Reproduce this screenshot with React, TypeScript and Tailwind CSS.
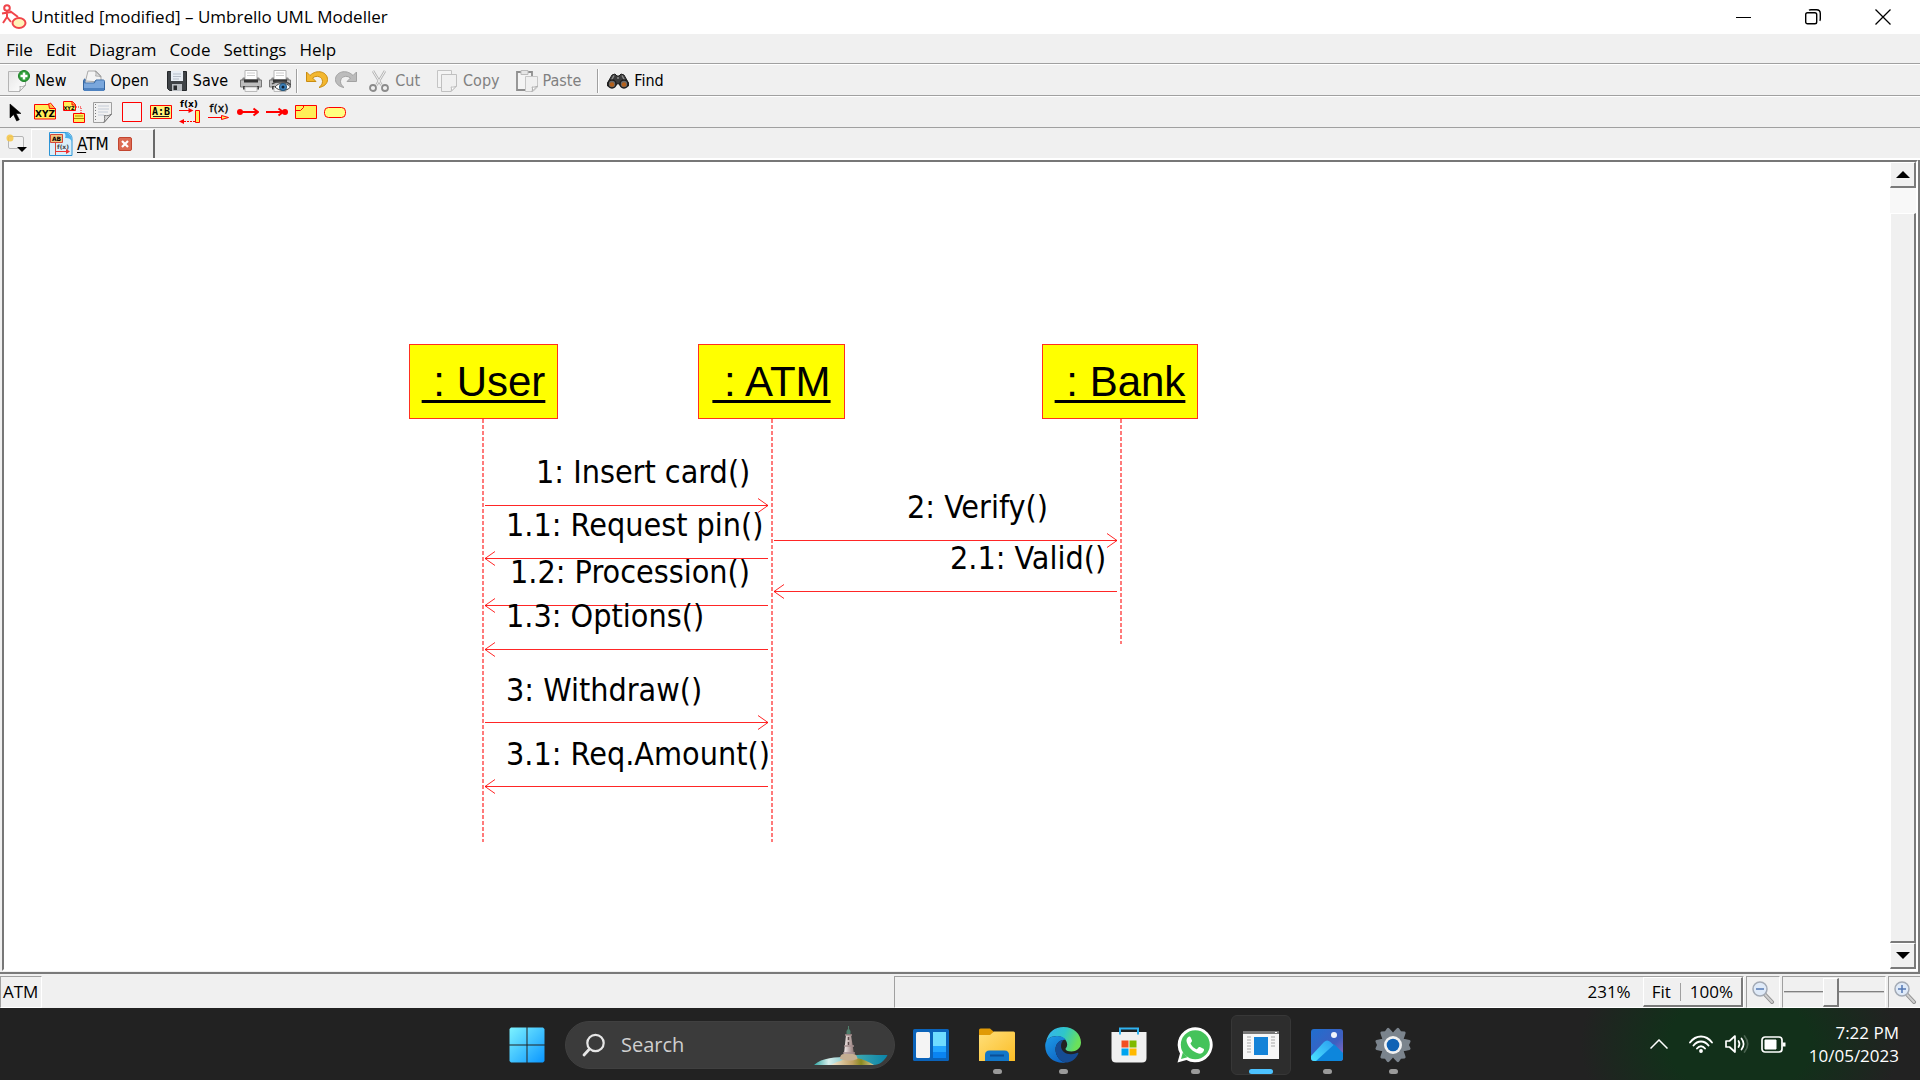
import type { ReactNode } from 'react';

const UI = "font-['Open_Sans','Noto_Sans',sans-serif]";
const TAHOMA = "font-['DejaVu_Sans_Condensed','Noto_Sans',sans-serif]";

/* ---------- window and toolbar icons ---------- */

const AppIcon = () => (
  <svg width="26" height="26" viewBox="0 0 26 26" fill="none" stroke="#f0444a" strokeWidth="2">
    <circle cx="6" cy="4" r="2.8" />
    <path d="M6 7v7M1 9.5l9-1.5M6 13l-4 6M6 13l4 5M9 7l8 6" />
    <ellipse cx="18" cy="19" rx="6.5" ry="5" fill="#fff3b8" />
  </svg>
);

const NewIcon = () => (
  <svg width="22" height="22" viewBox="0 0 22 22">
    <defs>
      <linearGradient id="paper" x1="0" y1="0" x2="1" y2="1">
        <stop offset="0" stopColor="#e6e6e6" />
        <stop offset="1" stopColor="#ffffff" />
      </linearGradient>
    </defs>
    <path d="M.5 1.500h17V15l-6 6.500H.5z" fill="url(#paper)" stroke="#b4b4b4" />
    <path d="M11.500 21.500c1-2 .8-4 .3-5 2 .5 4 0 5.700-1.500z" fill="#fff" stroke="#aaa" />
    <circle cx="16" cy="6" r="5.500" fill="#2f9e3a" stroke="#1d8028" />
    <path d="M16 2.500v7M12.500 6h7" stroke="#fff" strokeWidth="2.500" />
  </svg>
);

const OpenIcon = () => (
  <svg width="22" height="22" viewBox="0 0 22 22">
    <path d="M2.500 11 5 1h8l5 5v6z" fill="#f4f4f4" stroke="#aaa" />
    <path d="M12 1c1.500 2 1 4 .5 5 2 0 4 .3 5.500 1z" fill="#ddd" stroke="#999" strokeWidth=".7" />
    <path d="M.5 11c0-1 .5-2 1.500-2v4h9l2-3h7c1 0 1.500.5 1.500 1.500V20H.5z" fill="#5b8cc9" stroke="#36669f" />
    <path d="M1 13.500h10.500l2-3H21V20H1z" fill="#7aa7dc" />
    <path d="M1 18h20v3H1z" fill="#4e82c0" />
  </svg>
);

const SaveIcon = () => (
  <svg width="22" height="22" viewBox="0 0 22 22">
    <path d="M1.500 1.500h19v19h-17l-2-2z" fill="#3f4347" stroke="#25282b" />
    <path d="M5 1h12v10H5z" fill="#e8eef5" />
    <path d="M7 4h8M7 6.500h8M7 9h6" stroke="#b5bdc8" />
    <path d="M6 14h10v7H6z" fill="#b9bdc2" />
    <path d="M7.500 15.500h3.500V20H7.500z" fill="#2a2d30" />
  </svg>
);

const PrinterShape = () => (
  <>
    <path d="M5 .5h12V10H5z" fill="#fff" stroke="#b5b5b5" />
    <path d="M7 3h8M7 5.500h8" stroke="#ccc" />
    <path d="M3 7.500h2V10h12V7.500h2l2 3H1z" fill="#8a8a8a" />
    <path d="M.5 10h21v7H.5z" fill="#bdbdbd" stroke="#777" />
    <path d="M4 9.500h14v3H4z" fill="#333" />
    <path d="M3 16h16v3.500H3z" fill="#444" />
    <path d="M5 17h12v4.500H5z" fill="#f5f5f5" stroke="#bbb" />
  </>
);

const PrintIcon = () => (
  <svg width="22" height="22" viewBox="0 0 22 22">
    <PrinterShape />
  </svg>
);

const PreviewIcon = () => (
  <svg width="22" height="22" viewBox="0 0 22 22">
    <PrinterShape />
    <path d="M6 17c4-5 11-5 15.500 0-4 4.500-11 4.500-15.500 0z" fill="#fff" stroke="#444" />
    <circle cx="14" cy="17" r="3.600" fill="#3f83bd" stroke="#24587f" />
    <circle cx="14" cy="17" r="1.500" fill="#123" />
    <path d="M3 14c4-3 13-4 19 1" stroke="#4a4a4a" strokeWidth="1.500" fill="none" />
  </svg>
);

const UndoIcon = ({ mirrored = false }: { mirrored?: boolean }) => (
  <svg width="22" height="22" viewBox="0 0 22 22">
    <path
      d={
        mirrored
          ? 'M21.500 2v9.500H12l3.500-3.500C11 4.500 5.500 7 5.500 11.500c0 2.500 1.500 4.500 3.500 6C3.500 16.500.5 13.500.5 9.500.5 2 11-1.500 18 5.500z'
          : 'M.5 2v9.500H10L6.500 8c4.500-3.500 10-1 10 3.500 0 2.500-1.500 4.500-3.500 6 5.500-1 8.500-4 8.500-8C21.500 2 11-1.500 4 5.500z'
      }
      fill={mirrored ? '#bcbcbc' : '#f3b72f'}
      stroke={mirrored ? '#a2a2a2' : '#c98c10'}
    />
  </svg>
);

const CutIcon = () => (
  <svg width="22" height="22" viewBox="0 0 22 22" fill="none">
    <path d="M5 1l8.500 14M17 1 8.500 15" stroke="#b4b4b4" strokeWidth="2.500" />
    <path d="M5 1l8.500 14M17 1 8.500 15" stroke="#f3f3f3" />
    <circle cx="5" cy="18" r="3" stroke="#8c8c8c" strokeWidth="1.800" />
    <circle cx="17" cy="18" r="3" stroke="#8c8c8c" strokeWidth="1.800" />
  </svg>
);

const CopyIcon = () => (
  <svg width="22" height="22" viewBox="0 0 22 22">
    <path d="M1.500.5h14v17h-14z" fill="#f4f4f4" stroke="#c4c4c4" />
    <path d="M5.500 4.500h15V16L15 21.500H5.500z" fill="#f0f0f0" stroke="#c0c0c0" />
    <path d="M15 21.500c.8-2 .5-3.500 0-4.500 2 .3 4 0 5.500-1z" fill="#fff" stroke="#bbb" />
  </svg>
);

const PasteIcon = () => (
  <svg width="22" height="22" viewBox="0 0 22 22">
    <path d="M1 2h15v18H1z" fill="#f4f4f4" stroke="#8e8e8e" strokeWidth="1.800" />
    <path d="M5 .5h7v4H5z" fill="#e6e6e6" stroke="#bbb" />
    <path d="M9.500 6.500h12V17L17 21.500H9.500z" fill="#f0f0f0" stroke="#c6c6c6" />
    <path d="M16 21.500c.8-2 .5-3.500 0-4.500 2 .3 4 0 5.500-1z" fill="#fff" stroke="#aaa" />
  </svg>
);

const FindIcon = () => (
  <svg width="22" height="22" viewBox="0 0 22 22">
    <path d="M5 5l3-1 2 2h2l2-2 3 1 4.500 8v3l-9-1-1.500-2-1.500 2-9 1v-3z" fill="#3b3b3b" stroke="#222" />
    <path d="M7 5.500 4 11M15 5.500l3 5.500M10 8h2" stroke="#8d8d8d" strokeWidth="1.500" />
    <circle cx="5" cy="14" r="4" fill="#6a6a6a" stroke="#1c1c1c" strokeWidth="1.500" />
    <circle cx="17" cy="14" r="4" fill="#6a6a6a" stroke="#1c1c1c" strokeWidth="1.500" />
    <circle cx="5" cy="14.500" r="2.300" fill="#b5611c" />
    <circle cx="17" cy="14.500" r="2.300" fill="#b5611c" />
  </svg>
);

/* ---------- UML tool icons ---------- */

const CursorTool = () => (
  <svg width="22" height="22" viewBox="0 0 22 22">
    <path d="M5 3v14l3.500-3.500 3.200 6.500 2.600-1.300-3.200-6.200H16z" fill="#000" stroke="#000" strokeWidth=".6" />
  </svg>
);

const ClassTool = () => (
  <svg width="22" height="22" viewBox="0 0 22 22">
    <path d="M.5 3.500h14l2-1.500 5 6v10H.5z" fill="#ffee58" stroke="#f00" />
    <path d="M14.500 2.500l1 5h6" fill="#ffb347" stroke="#f00" />
    <text x="11" y="16" textAnchor="middle" className="font-['DejaVu_Sans'] text-[9px] font-bold">XYZ</text>
  </svg>
);

const ClassLinkTool = () => (
  <svg width="22" height="22" viewBox="0 0 22 22">
    <path d="M.5.5h9l3 3v6H.5z" fill="#ffee58" stroke="#f00" />
    <path d="M9 .5v3.500h3.500" fill="#ffb347" stroke="#f00" />
    <text x="6" y="8.500" textAnchor="middle" className="font-['DejaVu_Sans'] text-[5px] font-bold">XYZ</text>
    <path d="M13 6h5v6" fill="none" stroke="#f00" strokeDasharray="1 1" />
    <path d="M10.500 12.500h11v9h-11z" fill="#ffee58" stroke="#f00" />
    <path d="M12 15h8M11 17.500h10" stroke="#a80" />
  </svg>
);

const NoteTool = () => (
  <svg width="22" height="22" viewBox="0 0 22 22">
    <path d="M1.500 1.500h18V13L12 21.500H1.500z" fill="#f1f1f1" stroke="#9f9f9f" />
    <path d="M6 5h11M6 8h11M6 11h10M6 14h6" stroke="#c4cbd6" />
    <path d="M3.500 3v17" stroke="#777" strokeDasharray="1 2" />
    <path d="M12 21.500c1-3 .8-5.500.3-7 3 .6 5 0 7.200-1.500z" fill="#ddd" stroke="#777" />
  </svg>
);

const BoxTool = () => (
  <svg width="22" height="22" viewBox="0 0 22 22">
    <path d="M1.500 1.500h19v19h-19z" fill="#f4f4f4" stroke="#f00" />
  </svg>
);

const ObjectTool = () => (
  <svg width="22" height="22" viewBox="0 0 22 22">
    <path d="M.5 4.500h21v13H.5z" fill="#fff27a" stroke="#f00" />
    <text x="11" y="14" textAnchor="middle" className="font-['DejaVu_Sans_Mono'] text-[10px] font-bold">A:B</text>
    <path d="M3 15.500h16" stroke="#222" />
  </svg>
);

const SyncTool = () => (
  <svg width="22" height="22" viewBox="0 0 22 22" overflow="visible">
    <text x="10" y="6" textAnchor="middle" className="font-['DejaVu_Sans'] text-[9px] font-bold">f(x)</text>
    <path d="M0 9.500h12" stroke="#f00" />
    <path d="M9.500 7l5 2.500-5 2.500z" fill="#f00" />
    <path d="M16.500 9.500h4v12h-4z" fill="#ffee58" stroke="#f00" />
    <path d="M16 20.500H4" stroke="#f00" strokeDasharray="2 1" />
    <path d="M5 18l-5 2.500L5 23z" fill="#f00" />
  </svg>
);

const AsyncTool = () => (
  <svg width="22" height="22" viewBox="0 0 22 22" overflow="visible">
    <text x="11" y="11" textAnchor="middle" className="font-['DejaVu_Sans'] text-[11px]" stroke="#000" strokeWidth=".3">f(x)</text>
    <path d="M0 16.500h14" stroke="#f00" />
    <path d="M13.500 14.500l7 2-7 2z" fill="#ffee58" stroke="#f00" />
  </svg>
);

const FoundTool = () => (
  <svg width="22" height="22" viewBox="0 0 22 22" fill="none" stroke="#f00" strokeWidth="2">
    <circle cx="3" cy="11" r="3" fill="#f00" stroke="none" />
    <path d="M3 11h18M16.500 7.500l4.500 3.500-4.500 3.500" />
  </svg>
);

const LostTool = () => (
  <svg width="22" height="22" viewBox="0 0 22 22" fill="none" stroke="#f00" strokeWidth="2">
    <circle cx="19" cy="11" r="3" fill="#f00" stroke="none" />
    <path d="M0 11h18M12.500 7.500 17 11l-4.500 3.500" />
  </svg>
);

const FragmentTool = () => (
  <svg width="22" height="22" viewBox="0 0 22 22">
    <path d="M.5 4.500h21v13H.5z" fill="#ffee58" stroke="#f00" />
    <path d="M.5 9.500h5l3-3v-2" fill="none" stroke="#f00" />
  </svg>
);

const PreconditionTool = () => (
  <svg width="22" height="22" viewBox="0 0 22 22">
    <rect x=".5" y="6.500" width="21" height="10" rx="4" fill="#ffff80" stroke="#f00" />
  </svg>
);

const NewTabIcon = () => (
  <svg width="22" height="22" viewBox="0 0 22 22">
    <rect x="3.500" y="3.500" width="15" height="12" rx="1.500" fill="#f2f2f2" stroke="#b5b5b5" />
    <circle cx="5" cy="5" r="3.500" fill="#f6c544" opacity=".85" />
    <path d="M12 14h10l-5 5z" fill="#000" />
  </svg>
);

const DiagramTabIcon = () => (
  <svg width="24" height="24" viewBox="0 0 24 24">
    <path d="M.5.500h17c3 0 5.500 3 5.500 6v17H.5z" fill="#d9effa" stroke="#2b94d6" />
    <path d="M15 .5c5 0 8 3 8 9-1.500-3-4-4-7-3.500 1-2 .5-4-1-5.500z" fill="#4db1ea" />
    <path d="M1.500 2.500h12v8h-12z" fill="#f1c27a" stroke="#d3473a" />
    <text x="7.500" y="9" textAnchor="middle" className="font-['DejaVu_Sans'] text-[6px] font-bold">AB</text>
    <path d="M6.500 11v12" stroke="#d3473a" />
    <text x="14" y="17" textAnchor="middle" className="font-['DejaVu_Sans'] text-[6px] font-bold" fill="#444">f(x)</text>
    <path d="M7 19.500h12" stroke="#e33" />
    <path d="M17 17l4 2.500-4 2.500z" fill="#e33" />
  </svg>
);

const ZoomIcon = ({ plus = false }: { plus?: boolean }) => (
  <svg width="24" height="24" viewBox="0 0 24 24">
    <path d="M13.500 14l7.500 8" stroke="#8f8f8f" strokeWidth="4" strokeLinecap="round" />
    <path d="M13.500 14l7.500 8" stroke="#cfcfcf" strokeWidth="2" strokeLinecap="round" />
    <circle cx="9" cy="9" r="7" fill="#dfeaf8" stroke="#a3aab5" strokeWidth="1.500" />
    <path d={plus ? 'M5 9h8M9 5v8' : 'M5 9h8'} stroke="#5478b4" strokeWidth="1.500" />
  </svg>
);

/* ---------- taskbar icons ---------- */

const StartIcon = () => (
  <svg width="36" height="36" viewBox="0 0 36 36">
    <defs>
      <linearGradient id="win" x1="0" y1="0" x2="1" y2="1">
        <stop offset="0" stopColor="#7df3ff" />
        <stop offset="1" stopColor="#0a96ff" />
      </linearGradient>
    </defs>
    <path d="M2 .500h15.500v17H.500V2zM18.500.5H34L35.500 2v15.500h-17zM.5 18.500h17v17H2L.5 34zM18.500 18.500h17V34L34 35.500H18.500z" fill="url(#win)" />
  </svg>
);

const WidgetsIcon = () => (
  <svg width="36" height="32" viewBox="0 0 36 32">
    <rect width="36" height="32" rx="1.500" fill="#0a63ba" />
    <rect x="3" y="3" width="14" height="26" rx="1.500" fill="#f4f4f4" />
    <path d="M20 3h13v14H20z" fill="#6fdcff" />
    <path d="M20 17h13v6H20z" fill="#22a5ff" />
    <path d="M20 23h13v6H20z" fill="#0a84f2" />
  </svg>
);

const ExplorerIcon = () => (
  <svg width="36" height="34" viewBox="0 0 36 34">
    <defs>
      <linearGradient id="folder" x1="0" y1="0" x2="1" y2="1">
        <stop offset="0" stopColor="#ffdf7a" />
        <stop offset="1" stopColor="#fbbd25" />
      </linearGradient>
    </defs>
    <path d="M0 2Q0 .5 1.500.5H11l4 3.500-3 4H0z" fill="#e09a06" />
    <path d="M0 7h11l4-3.500h19.500Q36 3.500 36 5v28H0z" fill="url(#folder)" />
    <path d="M6 33v-6q0-4.500 4.500-4.500h15q4.500 0 4.500 4.500v6z" fill="#1277c9" />
    <path d="M11 27.500h14" stroke="#0a4f96" strokeWidth="2" />
  </svg>
);

const EdgeIcon = () => (
  <svg width="36" height="36" viewBox="0 0 36 36">
    <defs>
      <linearGradient id="edgeTop" x1="0" y1="0" x2="1" y2=".3">
        <stop offset="0" stopColor="#36b0f5" />
        <stop offset=".55" stopColor="#2fc6c9" />
        <stop offset="1" stopColor="#6be05a" />
      </linearGradient>
      <linearGradient id="edgeLow" x1="0" y1="0" x2=".6" y2="1">
        <stop offset="0" stopColor="#1d9ce8" />
        <stop offset="1" stopColor="#0f66c4" />
      </linearGradient>
    </defs>
    <path d="M1 15C3 5 10 0 18.500 0 29 0 36 7.500 36 15.500c0 6-5 9-9.500 9-4 0-6-1.500-6-2.500s1.700-1.800 1.700-4.500c0-4-4.200-8.500-10.200-8.500C7 9 3 11 1 15z" fill="url(#edgeTop)" />
    <path d="M.3 17C1 12 6 9 12 9c4 0 7.500 1.500 9 4-5-1-10.500 3-10.500 9.500 0 6 4.500 12.500 10.500 13-11 2-22-6-20.700-18.500z" fill="url(#edgeLow)" />
    <path d="M10.500 22.500C10.500 17 14 13 18.500 13c-2 2-2.500 4-2.500 6 0 6 7 10 14.500 7.500.9-.3 2.200-1 2.700-.7.600.3-.2 1.700-.7 2.400C29.500 33 25.500 35.500 21 35.500c-6-.500-10.500-7-10.500-13z" fill="#154c94" />
  </svg>
);

const StoreIcon = () => (
  <svg width="36" height="36" viewBox="0 0 36 36">
    <path d="M9 7V1.500h18V7" fill="none" stroke="#2fb2f0" strokeWidth="2" />
    <path d="M.5 5h35v26q0 4.500-4.500 4.500H5Q.5 35.500.5 31z" fill="#f1f1f1" />
    <path d="M9 5v2.500M27 5v2.500" stroke="#2fb2f0" strokeWidth="2" />
    <path d="M10.500 13.500h7v7h-7z" fill="#f25022" />
    <path d="M18.500 13.500h7v7h-7z" fill="#7fba00" />
    <path d="M10.500 21.500h7v7h-7z" fill="#00a4ef" />
    <path d="M18.500 21.500h7v7h-7z" fill="#ffb900" />
  </svg>
);

const WhatsAppIcon = () => (
  <svg width="36" height="36" viewBox="0 0 36 36">
    <path d="M.5 35.500 3 26.500A17.500 17.500 0 1 1 9.500 33z" fill="#fff" />
    <circle cx="18.300" cy="17.700" r="14.500" fill="#44c35a" />
    <path d="M4 32l1.800-6.500 4.700 4.800z" fill="#44c35a" />
    <path d="M12 9.500c-2 1-3 3-2.300 5.500C11.300 20.500 16 25 21.500 26.500c2.500.6 5-1 5.500-3.300.2-1-.2-1.300-1-1.700l-3-1.400c-.7-.3-1.200-.2-1.600.4l-1 1.300c-.4.500-.9.500-1.500.2-2.200-1-4-2.700-5.200-4.900-.3-.5-.2-.9.200-1.300l.8-1c.4-.5.400-.9.200-1.500l-1.300-3.100c-.3-.8-.9-.9-1.600-.7z" fill="#fff" />
  </svg>
);

const WindowIcon = () => (
  <svg width="36" height="28" viewBox="0 0 36 28">
    <path d="M0 0h36v28H0z" fill="#f7f7f7" />
    <path d="M0 0h36v3H0z" fill="#777" />
    <path d="M32 1.500h2" stroke="#fff" />
    <path d="M11 6h14v18H11z" fill="#1483d8" />
    <path d="M4 6h4M4 9h4M4 12h4M4 15h4M4 18h4M4 21h4M28 6h4M28 9h4M28 12h4M28 15h4" stroke="#cfcfcf" strokeWidth="2" />
  </svg>
);

const PhotosIcon = () => (
  <svg width="32" height="32" viewBox="0 0 32 32">
    <defs>
      <linearGradient id="sky" x1="0" y1="0" x2="1" y2="1">
        <stop offset="0" stopColor="#1f6fd0" />
        <stop offset=".6" stopColor="#3f5fc0" />
        <stop offset="1" stopColor="#9f6ac0" />
      </linearGradient>
      <linearGradient id="hill" x1="1" y1="0" x2="0" y2="1">
        <stop offset="0" stopColor="#2a9df0" />
        <stop offset="1" stopColor="#4be3ff" />
      </linearGradient>
      <clipPath id="photoFrame">
        <rect width="32" height="32" rx="3" />
      </clipPath>
    </defs>
    <g clipPath="url(#photoFrame)">
      <path d="M0 0h32v32H0z" fill="url(#sky)" />
      <path d="M3 32 19 16q2.500-2 5 0l9 9v7z" fill="#0d86dc" />
      <path d="M0 27 13 13q3-3 6.500 0l3 3L5 32H0z" fill="url(#hill)" />
      <circle cx="23" cy="6" r="3" fill="#f0f4fb" />
    </g>
  </svg>
);

const SettingsIcon = () => (
  <svg width="36" height="36" viewBox="0 0 36 36">
    {[30, 90, 150].map((angle) => (
      <path
        key={angle}
        d="M12 6l1-4.500q.4-1.300 1.700-1L18 2l3.300-1.500q1.300-.3 1.700 1L24 6v24l-1 4.500q-.4 1.300-1.700 1L18 34l-3.300 1.500q-1.300.3-1.700-1L12 30z"
        fill="#7b848d"
        transform={`rotate(${angle} 18 18)`}
      />
    ))}
    <circle cx="18" cy="18" r="12.500" fill="#7b848d" />
    <circle cx="18" cy="18" r="9" fill="#f1f1f1" />
    <circle cx="18" cy="18" r="6.300" fill="#0f62b5" />
  </svg>
);

const SearchGlyph = () => (
  <svg width="24" height="24" viewBox="0 0 24 24" fill="none" stroke="#e6e6e6" strokeWidth="2.200" strokeLinecap="round">
    <circle cx="13.500" cy="10" r="8.200" />
    <path d="M7.500 16 2 22" strokeWidth="2.800" />
  </svg>
);

const LighthouseArt = () => (
  <svg width="74" height="40" viewBox="0 0 74 40">
    <defs>
      <linearGradient id="sea" x1="0" y1="0" x2="1" y2="0">
        <stop offset="0" stopColor="#2fa7a4" />
        <stop offset=".2" stopColor="#d9efec" />
        <stop offset=".6" stopColor="#3aa6b0" />
        <stop offset="1" stopColor="#0a83a8" />
      </linearGradient>
      <linearGradient id="tower" x1="0" y1="0" x2="1" y2="0">
        <stop offset="0" stopColor="#f6eeec" />
        <stop offset="1" stopColor="#8d7472" />
      </linearGradient>
      <linearGradient id="land" x1="0" y1="0" x2="1" y2="0">
        <stop offset="0" stopColor="#f0e6d2" />
        <stop offset=".5" stopColor="#c0a063" />
        <stop offset=".7" stopColor="#8a8a1f" />
        <stop offset="1" stopColor="#d8c49a" />
      </linearGradient>
    </defs>
    <path d="M0 39C8 31 22 32 34 30c12-2 24-1 39.500-1-3 6-8 10-14 10z" fill="url(#sea)" />
    <path d="M17 39c6-4 12-4 15-7h10c7 1 13 4 18 7z" fill="url(#land)" />
    <path d="M26 33q0-5 4-5h9q4 0 4.500 5-8 3.500-17.500 0z" fill="#c4ae92" />
    <path d="M32 9h5l3 19H30z" fill="url(#tower)" />
    <path d="M31 9h7M30 20h10M29 27h12" stroke="#a58e8e" strokeWidth="1.500" />
    <path d="M34.500 11v3M34.500 16v3" stroke="#5a4a4a" strokeWidth="1.500" />
    <path d="M32.500 8V5l2-3 2 3v3z" fill="#4f7f6c" />
    <path d="M34.500 0v3" stroke="#4f7f6c" />
  </svg>
);

/* ---------- window chrome ---------- */

function TitleBar() {
  return (
    <header className={`flex h-[34px] items-center bg-white pr-[2px] text-[17px] text-black ${UI}`}>
      <h1 className="flex flex-1 items-center gap-1 pl-px">
        <AppIcon />
        <span className="leading-6">Untitled [modified] – Umbrello UML Modeller</span>
      </h1>
      <button aria-label="Minimize" className="flex h-full w-[70px] items-center justify-center">
        <svg width="15" height="15" viewBox="0 0 15 15"><path d="M0 7.500h15" stroke="#000" /></svg>
      </button>
      <button aria-label="Restore" className="flex h-full w-[70px] items-center justify-center">
        <svg width="16" height="16" viewBox="0 0 16 16" fill="none" stroke="#000" strokeWidth="1.400">
          <rect x=".7" y="3.700" width="11" height="11" rx="1.800" />
          <path d="M4 1.200C4.500.8 5 .7 6 .7h5.500c2.300 0 3.800 1.500 3.800 3.800V10c0 .8-.2 1.300-.6 1.700" />
        </svg>
      </button>
      <button aria-label="Close" className="flex h-full w-[70px] items-center justify-center">
        <svg width="16" height="16" viewBox="0 0 16 16" stroke="#000" strokeWidth="1.300"><path d="M.5.5l15 15M15.500.5l-15 15" /></svg>
      </button>
    </header>
  );
}

function MenuBar() {
  return (
    <nav className={`flex h-[30px] items-center gap-[13px] border-b border-[#a0a0a0] pt-[2px] pl-[6px] text-[17px] leading-6 ${UI}`}>
      {['File', 'Edit', 'Diagram', 'Code', 'Settings', 'Help'].map((item) => (
        <button key={item}>{item}</button>
      ))}
    </nav>
  );
}

function TextTool({ icon, label, disabled = false }: { icon: ReactNode; label: string; disabled?: boolean }) {
  return (
    <button disabled={disabled} className="flex items-center gap-[5px] pr-3 pl-1 text-black disabled:text-[#808080]">
      {icon}
      <span>{label}</span>
    </button>
  );
}

function IconTool({ icon, label, disabled = false }: { icon: ReactNode; label: string; disabled?: boolean }) {
  return (
    <button aria-label={label} disabled={disabled} className="flex w-[29px] shrink-0 items-center justify-center">
      {icon}
    </button>
  );
}

const Divider = () => <span className="h-6 w-[2px] border-r border-l border-r-white border-l-[#a0a0a0]" />;

function MainToolbar() {
  return (
    <div
      role="toolbar"
      aria-label="Main toolbar"
      className={`flex h-8 items-center border-t border-b border-t-white border-b-[#a0a0a0] pt-px pl-1 text-[16px] leading-5 ${TAHOMA}`}
    >
      <div className="flex items-center gap-px">
        <TextTool icon={<NewIcon />} label="New" />
        <TextTool icon={<OpenIcon />} label="Open" />
        <TextTool icon={<SaveIcon />} label="Save" />
      </div>
      <div className="-ml-1 flex">
        <IconTool icon={<PrintIcon />} label="Print" />
        <IconTool icon={<PreviewIcon />} label="Print preview" />
      </div>
      <div className="flex items-center gap-1 pl-[2px]">
        <Divider />
        <div className="flex">
          <IconTool icon={<UndoIcon />} label="Undo" />
          <IconTool icon={<UndoIcon mirrored />} label="Redo" disabled />
        </div>
        <div className="flex">
          <TextTool icon={<CutIcon />} label="Cut" disabled />
          <TextTool icon={<CopyIcon />} label="Copy" disabled />
          <TextTool icon={<PasteIcon />} label="Paste" disabled />
        </div>
        <Divider />
        <TextTool icon={<FindIcon />} label="Find" />
      </div>
    </div>
  );
}

const TOOLS: [string, ReactNode][] = [
  ['Select', <CursorTool />],
  ['Class', <ClassTool />],
  ['Class link', <ClassLinkTool />],
  ['Note', <NoteTool />],
  ['Box', <BoxTool />],
  ['Object', <ObjectTool />],
  ['Synchronous message', <SyncTool />],
  ['Asynchronous message', <AsyncTool />],
  ['Found message', <FoundTool />],
  ['Lost message', <LostTool />],
  ['Combined fragment', <FragmentTool />],
  ['Precondition', <PreconditionTool />],
];

function DiagramToolbar() {
  return (
    <div
      role="toolbar"
      aria-label="Diagram toolbar"
      className="flex h-8 items-center border-t border-b border-t-white border-b-[#a0a0a0] pl-px"
    >
      {TOOLS.map(([label, icon]) => (
        <IconTool key={label} icon={icon} label={label} />
      ))}
    </div>
  );
}

function TabBar() {
  return (
    <div className={`flex h-8 items-end border-b-2 border-white text-[17px] leading-5 ${TAHOMA}`}>
      <button aria-label="New diagram" className="flex h-7 w-[31px] items-center justify-center">
        <NewTabIcon />
      </button>
      <div role="tablist" className="flex h-[29px] items-center gap-[9px] border-t border-r-2 border-l border-t-white border-r-[#696969] border-l-white pr-[21px] pl-[17px]">
        <button role="tab" aria-selected="true" className="flex items-center gap-1">
          <DiagramTabIcon />
          <span><span className="underline underline-offset-2">A</span>TM</span>
        </button>
        <button aria-label="Close tab" className="flex size-[14px] items-center justify-center rounded-xs border border-[#c2452f] bg-[#dc6a52]">
          <svg width="8" height="8" viewBox="0 0 8 8" stroke="#fff" strokeWidth="2.200"><path d="M1 1l6 6M7 1 1 7" /></svg>
        </button>
      </div>
    </div>
  );
}

/* ---------- diagram ---------- */

const OBJECTS = [
  { name: ' : User', x: 405, y: 182, width: 149 },
  { name: ' : ATM', x: 694, y: 182, width: 147 },
  { name: ' : Bank', x: 1038, y: 182, width: 156 },
];

const LIFELINES = [
  { x: 479, end: 680 },
  { x: 768, end: 680 },
  { x: 1117, end: 482 },
];

const MESSAGES = [
  { text: '1: Insert card()', x: 532, y: 291, from: 481, to: 764, line: 343 },
  { text: '1.1: Request pin()', x: 502, y: 344, from: 764, to: 481, line: 396 },
  { text: '1.2: Procession()', x: 506, y: 391, from: 764, to: 481, line: 443 },
  { text: '1.3: Options()', x: 502, y: 435, from: 764, to: 481, line: 487 },
  { text: '3: Withdraw()', x: 502, y: 509, from: 481, to: 764, line: 560 },
  { text: '3.1: Req.Amount()', x: 502, y: 573, from: 764, to: 481, line: 624 },
  { text: '2: Verify()', x: 903, y: 326, from: 770, to: 1113, line: 378 },
  { text: '2.1: Valid()', x: 946, y: 377, from: 1113, to: 770, line: 429 },
];

function Diagram() {
  return (
    <div className="relative min-w-0 flex-1 overflow-hidden bg-white text-black">
      <svg className="absolute inset-0" width="100%" height="100%" fill="none" stroke="#f00">
        {LIFELINES.map(({ x, end }) => (
          <path key={x} d={`M${x} 257V${end}`} strokeDasharray="4 2" strokeWidth="1.300" opacity=".8" />
        ))}
        {MESSAGES.map(({ text, from, to, line }) => {
          const back = to > from ? -10 : 10;
          return (
            <path
              key={text}
              d={`M${from} ${line}.5H${to}m${back} -7l${-back} 7l${back} 7`}
              strokeWidth="1"
              opacity=".85"
            />
          );
        })}
      </svg>
      {OBJECTS.map(({ name, x, y, width }) => (
        <div
          key={name}
          className="absolute flex h-[75px] items-center justify-center border border-[#ff3020] bg-[#ffff00] font-['Liberation_Sans',Arial,sans-serif] text-[42px] leading-[48px] whitespace-pre underline decoration-[3px] underline-offset-4"
          style={{ left: x, top: y, width }}
        >
          {name}
        </div>
      ))}
      {MESSAGES.map(({ text, x, y }) => (
        <div
          key={text}
          className={`absolute text-[32px] leading-[38px] whitespace-pre ${TAHOMA}`}
          style={{ left: x, top: y }}
        >
          {text}
        </div>
      ))}
    </div>
  );
}

const RAISED = 'border-t border-r-2 border-b-2 border-l border-t-white border-r-[#7a7a7a] border-b-[#7a7a7a] border-l-white bg-[#f0f0f0]';

function ScrollBar() {
  return (
    <div className="flex w-[26px] flex-col bg-[#f8f8f8]">
      <button aria-label="Scroll up" className={`flex h-[26px] items-center justify-center ${RAISED}`}>
        <svg width="14" height="7" viewBox="0 0 14 7"><path d="M0 7 7 0l7 7z" /></svg>
      </button>
      <div className="h-[25px]" />
      <div className={`flex-1 ${RAISED}`} />
      <button aria-label="Scroll down" className={`flex h-[26px] items-center justify-center ${RAISED}`}>
        <svg width="14" height="7" viewBox="0 0 14 7"><path d="M0 0l7 7 7-7z" /></svg>
      </button>
    </div>
  );
}

const SUNKEN = 'border border-t-[#a0a0a0] border-r-white border-b-white border-l-[#a0a0a0]';

function StatusBar() {
  return (
    <footer className={`flex h-[34px] gap-[2px] pt-[2px] text-[17px] leading-6 ${UI}`}>
      <div className={`flex w-[42px] items-center pl-[2px] ${SUNKEN}`}>ATM</div>
      <div className="flex-1" />
      <div className={`flex flex-1 items-stretch justify-end ${SUNKEN}`}>
        <output className="flex items-center pr-3">231%</output>
        <div className={`flex items-center pr-2 pl-2 ${RAISED}`}>
          <button>Fit</button>
          <span className="mx-[9px] h-[18px] w-px bg-[#a0a0a0]" />
          <button>100%</button>
        </div>
      </div>
      <button aria-label="Zoom out" className={`flex w-[34px] items-center justify-center ${SUNKEN}`}>
        <ZoomIcon />
      </button>
      <div className={`flex w-[104px] items-center px-px ${SUNKEN}`}>
        <input
          type="range"
          aria-label="Zoom level"
          min="0"
          max="100"
          defaultValue="46"
          className="h-[30px] w-full appearance-none bg-transparent [&::-webkit-slider-runnable-track]:h-[2px] [&::-webkit-slider-runnable-track]:border-t [&::-webkit-slider-runnable-track]:border-b [&::-webkit-slider-runnable-track]:border-t-[#808080] [&::-webkit-slider-runnable-track]:border-b-[#c8c8c8] [&::-webkit-slider-thumb]:mt-[-14px] [&::-webkit-slider-thumb]:h-[29px] [&::-webkit-slider-thumb]:w-4 [&::-webkit-slider-thumb]:appearance-none [&::-webkit-slider-thumb]:border-t [&::-webkit-slider-thumb]:border-r-2 [&::-webkit-slider-thumb]:border-b-2 [&::-webkit-slider-thumb]:border-l [&::-webkit-slider-thumb]:border-t-white [&::-webkit-slider-thumb]:border-r-[#7a7a7a] [&::-webkit-slider-thumb]:border-b-[#7a7a7a] [&::-webkit-slider-thumb]:border-l-white [&::-webkit-slider-thumb]:bg-[#f0f0f0]"
        />
      </div>
      <button aria-label="Zoom in" className={`flex w-8 items-center justify-center border-r-0 ${SUNKEN}`}>
        <ZoomIcon plus />
      </button>
    </footer>
  );
}

/* ---------- taskbar ---------- */

const APPS: { label: string; icon: ReactNode; state: 'closed' | 'open' | 'active' }[] = [
  { label: 'Widgets', icon: <WidgetsIcon />, state: 'closed' },
  { label: 'File Explorer', icon: <ExplorerIcon />, state: 'open' },
  { label: 'Microsoft Edge', icon: <EdgeIcon />, state: 'open' },
  { label: 'Microsoft Store', icon: <StoreIcon />, state: 'closed' },
  { label: 'WhatsApp', icon: <WhatsAppIcon />, state: 'open' },
  { label: 'Umbrello', icon: <WindowIcon />, state: 'active' },
  { label: 'Photos', icon: <PhotosIcon />, state: 'open' },
  { label: 'Settings', icon: <SettingsIcon />, state: 'open' },
];

const STATE_CLASS = {
  closed: 'border-transparent',
  open: 'border-transparent',
  active: 'border-[#373737] bg-[#2d2d2d]',
};

const MARK_CLASS = {
  closed: 'w-0',
  open: 'w-[9px] bg-[#9a9a9a]',
  active: 'w-6 bg-[#4cc2ff]',
};

function Taskbar() {
  return (
    <div
      className={`grid h-[72px] grid-cols-[1fr_auto_1fr] items-center bg-[#222222] bg-[radial-gradient(ellipse_160px_110px_at_calc(100%-180px)_50%,#12301a_0%,#12301a_45%,transparent_100%)] text-white ${UI}`}
    >
      <div />
      <div className="flex items-center gap-[6px] pt-[2px]">
        <button aria-label="Start" className="flex size-[60px] items-center justify-center">
          <StartIcon />
        </button>
        <label className="ml-[2px] flex h-12 w-[330px] items-center overflow-hidden rounded-full border border-[#404040] bg-[#3b3b3b] pr-[6px] pl-4">
          <SearchGlyph />
          <input
            type="search"
            aria-label="Search"
            placeholder="Search"
            className="ml-[15px] min-w-0 flex-1 bg-transparent text-[20px] leading-7 outline-none placeholder:text-[#cfcfcf]"
          />
          <span className="self-end pb-[2px]"><LighthouseArt /></span>
        </label>
        {APPS.map(({ label, icon, state }) => (
          <button
            key={label}
            aria-label={label}
            className={`relative flex size-[60px] items-center justify-center rounded-md border ${STATE_CLASS[state]}`}
          >
            {icon}
            <span className={`absolute bottom-0 h-[5px] rounded-full ${MARK_CLASS[state]}`} />
          </button>
        ))}
      </div>
      <div className="flex items-center justify-end pr-[21px]">
        <button aria-label="Hidden icons" className="mr-[21px]">
          <svg width="18" height="10" viewBox="0 0 18 10" fill="none" stroke="#fff" strokeWidth="1.500"><path d="M.5 9.500 9 1l8.500 8.500" /></svg>
        </button>
        <button aria-label="Network, sound and battery" className="mr-[23px] flex items-center gap-3">
          <svg width="24" height="18" viewBox="0 0 24 18" fill="none" stroke="#fff" strokeWidth="1.900" strokeLinecap="round">
            <path d="M1 7.500C7-.5 17-.5 23 7.500M4.500 10.500c4.200-5.400 10.800-5.400 15 0M8 13.500c2.300-3 5.700-3 8 0" />
            <circle cx="12" cy="16" r="1.200" fill="#fff" stroke="#fff" strokeWidth="1.400" />
          </svg>
          <svg width="24" height="20" viewBox="0 0 24 20" fill="none" stroke="#fff" strokeWidth="1.700" strokeLinecap="round" strokeLinejoin="round">
            <path d="M1 7v6h3.500L10 18V2L4.500 7zM13.500 7c1.300 2 1.300 4 0 6M16.500 4.500c2.700 3.500 2.700 7.500 0 11" />
            <path d="M19.500 2c4 5 4 11 0 16" stroke="#4a6350" />
          </svg>
          <svg width="25" height="17" viewBox="0 0 25 17" fill="none" stroke="#fff" strokeWidth="1.700">
            <rect x="1" y="1" width="20" height="15" rx="3" />
            <path d="M4 4h11v9H4z" fill="#fff" stroke="#fff" strokeWidth="1" />
            <path d="M23 6.500v4" strokeWidth="3" />
          </svg>
        </button>
        <button className="text-right text-[17px] leading-[23px]">
          <time className="block">7:22 PM</time>
          <time className="block">10/05/2023</time>
        </button>
      </div>
    </div>
  );
}

export default function App() {
  return (
    <div className="flex min-h-screen flex-col bg-[#f0f0f0] text-black">
      <TitleBar />
      <MenuBar />
      <MainToolbar />
      <DiagramToolbar />
      <TabBar />
      <main className="flex flex-1 border-r-2 border-b-2 border-r-[#7a7a7a] border-b-[#7a7a7a] pb-px pl-[2px]">
        <div className="flex flex-1 border-2 border-t-[#777] border-r-white border-b-white border-l-[#777]">
          <Diagram />
          <ScrollBar />
        </div>
      </main>
      <StatusBar />
      <Taskbar />
    </div>
  );
}
